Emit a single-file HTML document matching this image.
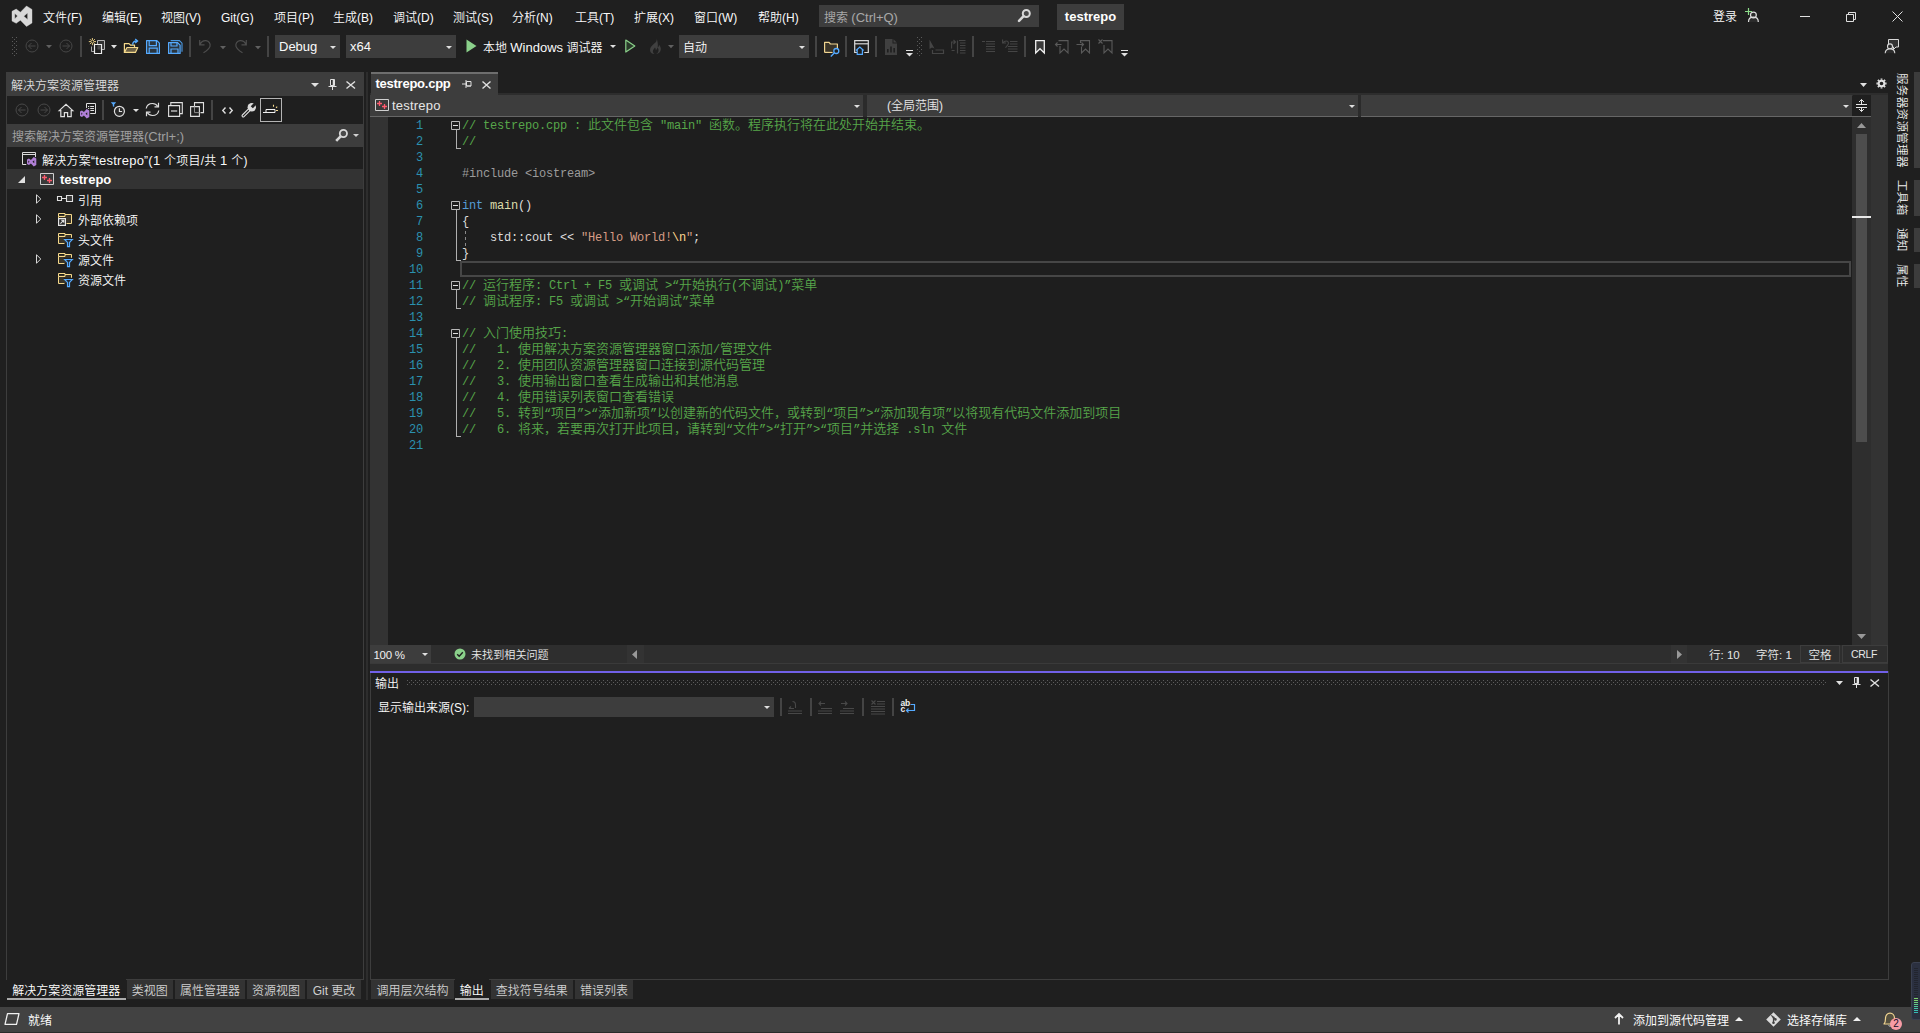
<!DOCTYPE html>
<html lang="zh-CN"><head><meta charset="utf-8"><title>testrepo - Microsoft Visual Studio</title>
<style>
html,body{margin:0;padding:0}
body{width:1920px;height:1033px;background:#1f1f1f;overflow:hidden;position:relative;
font-family:"Liberation Sans","Noto Sans CJK SC",sans-serif;font-size:12px;color:#fafafa;font-weight:350}
.a{position:absolute;box-sizing:border-box}
.t{position:absolute;white-space:nowrap}
.l{font-size:13px;line-height:0}
.code{position:absolute;white-space:pre;font-family:"Liberation Mono","Noto Sans CJK SC",monospace;font-size:12px;letter-spacing:-0.2px;height:16px;line-height:16px}
.code .c{font-family:"Noto Sans CJK SC",sans-serif;font-size:13px;letter-spacing:0;line-height:0;font-weight:350}
.ln{position:absolute;white-space:pre;font-family:"Liberation Mono",monospace;font-size:12px;letter-spacing:-0.2px;height:16px;line-height:16px;color:#2b91af;text-align:right;width:40px}
svg{overflow:visible}
</style></head>
<body>
<svg class="a" style="left:12px;top:5.9px;" width="20" height="20.4" viewBox="0 0 20 20.4"><path d="M0 5.300L4.200 3.100L8.400 6.200L14.500 0L20 3.400V17L14.500 20.400L8.400 14.200L4.200 17.300L0 15.100ZM2.800 7.400L5.500 10.050L2.800 12.700ZM15.600 7L11.800 10.200L15.600 13.400Z" fill="#d8d8d8" fill-rule="evenodd" stroke="#d8d8d8" stroke-width="0.400" stroke-linejoin="round"/></svg>
<div class="t" style="left:43px;top:10px;height:16px;line-height:16px;color:#fafafa;">文件(F)</div>
<div class="t" style="left:102px;top:10px;height:16px;line-height:16px;color:#fafafa;">编辑(E)</div>
<div class="t" style="left:161px;top:10px;height:16px;line-height:16px;color:#fafafa;">视图(V)</div>
<div class="t" style="left:221px;top:10px;height:16px;line-height:16px;color:#fafafa;">Git(G)</div>
<div class="t" style="left:274px;top:10px;height:16px;line-height:16px;color:#fafafa;">项目(P)</div>
<div class="t" style="left:333px;top:10px;height:16px;line-height:16px;color:#fafafa;">生成(B)</div>
<div class="t" style="left:393px;top:10px;height:16px;line-height:16px;color:#fafafa;">调试(D)</div>
<div class="t" style="left:453px;top:10px;height:16px;line-height:16px;color:#fafafa;">测试(S)</div>
<div class="t" style="left:512px;top:10px;height:16px;line-height:16px;color:#fafafa;">分析(N)</div>
<div class="t" style="left:575px;top:10px;height:16px;line-height:16px;color:#fafafa;">工具(T)</div>
<div class="t" style="left:634px;top:10px;height:16px;line-height:16px;color:#fafafa;">扩展(X)</div>
<div class="t" style="left:694px;top:10px;height:16px;line-height:16px;color:#fafafa;">窗口(W)</div>
<div class="t" style="left:758px;top:10px;height:16px;line-height:16px;color:#fafafa;">帮助(H)</div>
<div class="a" style="left:819px;top:5px;width:220px;height:22px;background:#3d3d3d;"></div>
<div class="t" style="left:824px;top:10px;height:16px;line-height:16px;color:#a8a8a8;font-weight:400;">搜索 <span class="l">(Ctrl+Q)</span></div>
<svg class="a" style="left:1016px;top:8px;" width="16" height="16" viewBox="0 0 16 16"><circle cx="10.300" cy="5.500" r="3.500" fill="#4a4a4a" stroke="#d8d8d8" stroke-width="2"/><path d="M7.600 8.200 L3 12.800" stroke="#d8d8d8" stroke-width="2.600" stroke-linecap="round"/></svg>
<div class="a" style="left:1057px;top:4px;width:67px;height:26px;background:#3d3d3d;"></div>
<div class="t" style="left:1057px;top:9px;height:16px;line-height:16px;color:#ffffff;font-size:13px;width:67px;text-align:center;font-weight:bold;">testrepo</div>
<div class="t" style="left:1713px;top:8.5px;height:16px;line-height:16px;color:#fafafa;">登录</div>
<svg class="a" style="left:1744px;top:7px;" width="16" height="16" viewBox="0 0 16 16"><path d="M1.500 12.500c0-3.200 2.200-5.200 5-5.200s5 2 5 5.200z" fill="#2b2b2b" transform="translate(3,2.500)"/><circle cx="9.400" cy="8" r="2.900" fill="#2b2b2b" stroke="#e0e0e0" stroke-width="1.200"/><path d="M4.500 15c0-3.200 2.200-4.800 4.900-4.800s4.900 1.600 4.900 4.800" fill="none" stroke="#e0e0e0" stroke-width="1.200"/><path d="M4.500 1v7M1 4.500h7" stroke="#8ddc8a" stroke-width="1.200"/></svg>
<div class="a" style="left:1800px;top:16px;width:10px;height:1px;background:#e0e0e0;"></div>
<svg class="a" style="left:1846px;top:12px;" width="10" height="10" viewBox="0 0 10 10"><path d="M0.5 2.5h7v7h-7z M2.5 2.5v-2h7v7h-2" fill="none" stroke="#e0e0e0" stroke-width="1"/></svg>
<svg class="a" style="left:1892px;top:11px;" width="11" height="11" viewBox="0 0 11 11"><path d="M0.5 0.5L10.5 10.5M10.5 0.5L0.5 10.5" stroke="#e0e0e0" stroke-width="1"/></svg>
<svg class="a" style="left:1884px;top:38px;" width="16" height="16" viewBox="0 0 16 16"><path d="M4.500 1.500h10v7.500h-2.500l-2.500 2.500v-2.500h-5z" fill="#333" stroke="#d8d8d8" stroke-width="1" stroke-linejoin="round"/><path d="M1 15.500c0-3 2-4.600 4.800-4.600s4.800 1.600 4.800 4.600z" fill="#1f1f1f"/><circle cx="6" cy="8.400" r="2.500" fill="#2b2b2b" stroke="#d8d8d8" stroke-width="1.100"/><path d="M1.200 15.300c0-3 2-4.400 4.800-4.400s4.800 1.400 4.800 4.400" fill="#2b2b2b" stroke="#d8d8d8" stroke-width="1.100"/></svg>
<svg class="a" style="left:12px;top:37px;" width="5" height="20" viewBox="0 0 5 20"><g fill="#5a5a5a"><rect x="0" y="0" width="1" height="1"/><rect x="4" y="0" width="1" height="1"/><rect x="2" y="2" width="1" height="1"/><rect x="0" y="4" width="1" height="1"/><rect x="4" y="4" width="1" height="1"/><rect x="2" y="6" width="1" height="1"/><rect x="0" y="8" width="1" height="1"/><rect x="4" y="8" width="1" height="1"/><rect x="2" y="10" width="1" height="1"/><rect x="0" y="12" width="1" height="1"/><rect x="4" y="12" width="1" height="1"/><rect x="2" y="14" width="1" height="1"/><rect x="0" y="16" width="1" height="1"/><rect x="4" y="16" width="1" height="1"/><rect x="2" y="18" width="1" height="1"/></g></svg>
<svg class="a" style="left:23.5px;top:37.5px" width="16" height="16" viewBox="-8 -8 16 16"><circle r="6" fill="none" stroke="#464646" stroke-width="1"/><path d="M-3.5 0H3.5M-0.5 -3L-3.5 0L-0.5 3" fill="none" stroke="#464646" stroke-width="1"/></svg>
<svg class="a" style="left:46.0px;top:44.85px" width="6" height="3.3" viewBox="0 0 6 3.3"><path d="M0 0H6L3.0 3.3Z" fill="#606060"/></svg>
<svg class="a" style="left:57.5px;top:37.5px" width="16" height="16" viewBox="-8 -8 16 16"><circle r="6" fill="none" stroke="#464646" stroke-width="1"/><path d="M-3.5 0H3.5M0.5 -3L3.5 0L0.5 3" fill="none" stroke="#464646" stroke-width="1"/></svg>
<div class="a" style="left:80px;top:36px;width:2px;height:21px;background:#444;"></div>
<svg class="a" style="left:89px;top:38px;" width="17" height="16" viewBox="0 0 17 16"><path d="M8.500 2.500h7v9h-7z" fill="#333" stroke="#b4b4b4" stroke-width="1"/><path d="M2.500 8.500v5h3" fill="none" stroke="#a8a8a8" stroke-width="1"/><path d="M5.500 6.500h7v9h-7z" fill="#1f1f1f" stroke="#ececec" stroke-width="1.200"/><path d="M8.500 7.200h3.400v4.300h-3.400z" fill="#4a4a4a"/><path d="M3.400 0v7.200M-0.200 3.600h7.200M0.900 1.100l5 5M5.900 1.100l-5 5" stroke="#f5d98b" stroke-width="0.900"/><circle cx="3.400" cy="3.600" r="1.100" fill="#1f1f1f"/></svg>
<svg class="a" style="left:111.0px;top:44.8px" width="6" height="3.4" viewBox="0 0 6 3.4"><path d="M0 0H6L3.0 3.4Z" fill="#e0e0e0"/></svg>
<svg class="a" style="left:123px;top:38px;" width="16" height="16" viewBox="0 0 16 16"><path d="M1.400 14.400V5.600H6L7.500 7.100h4v2.400" fill="none" stroke="#f5d98b" stroke-width="1.200" stroke-linejoin="round"/><path d="M1.400 14.400L4 9.500h10.800L12.400 14.400z" fill="#6b5f45" stroke="#f5d98b" stroke-width="1.200" stroke-linejoin="round"/><path d="M9.600 6.800C9.600 4.200 10.800 3 13.800 3M12.200 0.900L14.600 3L12.200 5.100" fill="none" stroke="#55aaff" stroke-width="1.300"/></svg>
<svg class="a" style="left:146px;top:40px;" width="14" height="14" viewBox="0 0 14 14"><path d="M0.600 0.600H10.900L13.400 3.100V13.400H0.600z" fill="#2a343d" stroke="#55aaff" stroke-width="1.200" stroke-linejoin="round"/><path d="M3.200 0.600V5.600h7.200V0.600M3.200 13.400V8.200h8V13.400" fill="none" stroke="#55aaff" stroke-width="1.200"/></svg>
<svg class="a" style="left:168px;top:40px;" width="15" height="14" viewBox="0 0 15 14"><path d="M2.600 0.600H11.400L14 3.200V11.800" fill="none" stroke="#4a98e0" stroke-width="1.100"/><path d="M0.600 2.600H9.600L12.100 5.100V13.400H0.600z" fill="#2a343d" stroke="#55aaff" stroke-width="1.200" stroke-linejoin="round"/><path d="M3 2.600V6h6V2.600M3 13.400V9h7v4.400" fill="none" stroke="#55aaff" stroke-width="1.200"/></svg>
<div class="a" style="left:189px;top:36px;width:2px;height:21px;background:#444;"></div>
<svg class="a" style="left:199px;top:39px;" width="13" height="14" viewBox="0 0 13 14"><path d="M0.7 1v4.8h4.8M1 5.5c1.2-2.5 3.4-4 6-3.8c3 .3 4.7 3 4 5.6c-.6 2-3 4.2-6.5 6.5" fill="none" stroke="#4d4d4d" stroke-width="1.2"/></svg>
<svg class="a" style="left:220.0px;top:45.85px" width="6" height="3.3" viewBox="0 0 6 3.3"><path d="M0 0H6L3.0 3.3Z" fill="#606060"/></svg>
<svg class="a" style="left:233.5px;top:39px;" width="13" height="14" viewBox="0 0 13 14"><path d="M12.3 1v4.8h-4.8M12 5.5c-1.2-2.5-3.4-4-6-3.8c-3 .3-4.7 3-4 5.6c.6 2 3 4.2 6.5 6.5" fill="none" stroke="#4d4d4d" stroke-width="1.2"/></svg>
<svg class="a" style="left:255.0px;top:45.85px" width="6" height="3.3" viewBox="0 0 6 3.3"><path d="M0 0H6L3.0 3.3Z" fill="#606060"/></svg>
<div class="a" style="left:267px;top:36px;width:2px;height:21px;background:#444;"></div>
<div class="a" style="left:275px;top:35px;width:65px;height:23px;background:#3d3d3d;"></div>
<div class="t" style="left:279px;top:39px;height:16px;line-height:16px;color:#fafafa;font-size:13px;">Debug</div>
<svg class="a" style="left:330.0px;top:45.5px" width="6" height="3" viewBox="0 0 6 3"><path d="M0 0H6L3.0 3Z" fill="#e0e0e0"/></svg>
<div class="a" style="left:346px;top:35px;width:110px;height:23px;background:#3d3d3d;"></div>
<div class="t" style="left:350px;top:39px;height:16px;line-height:16px;color:#fafafa;font-size:13px;">x64</div>
<svg class="a" style="left:446.0px;top:45.5px" width="6" height="3" viewBox="0 0 6 3"><path d="M0 0H6L3.0 3Z" fill="#e0e0e0"/></svg>
<svg class="a" style="left:465.5px;top:39px;" width="11" height="14" viewBox="0 0 11 14"><path d="M0.5 0.5L10.5 7L0.5 13.5Z" fill="#8ad08a"/></svg>
<div class="t" style="left:483px;top:40px;height:16px;line-height:16px;color:#fafafa;">本地 <span class="l">Windows</span> 调试器</div>
<svg class="a" style="left:610.0px;top:45.0px" width="6" height="3" viewBox="0 0 6 3"><path d="M0 0H6L3.0 3Z" fill="#e0e0e0"/></svg>
<svg class="a" style="left:625px;top:39px;" width="11" height="14" viewBox="0 0 11 14"><path d="M0.8 1L9.8 7L0.8 13Z" fill="#2a3a2a" stroke="#8ad08a" stroke-width="1.2" stroke-linejoin="round"/></svg>
<svg class="a" style="left:647px;top:38px;" width="15" height="16" viewBox="0 0 15 16"><path d="M9.500 0.300c.8 2.200-.4 3.800-2.200 5.300c-2.300 1.900-4.300 3.700-4.300 6.300c0 2.400 2 4 4.500 4c-1.300-.7-1.900-1.900-1.500-3.300c.3-1.200 1.400-2 2-3.200c.7 1 .9 1.800.7 2.800c1-.5 1.600-1.500 1.700-2.700c1 1 1.300 2.200 1.100 3.400c-.2 1.400-1.200 2.500-2.500 3c2.800-.2 4.800-2.200 4.800-5c0-1.600-.7-3-1.800-4.200c0 1.300-.4 2.200-1.300 2.800c.6-3.300-.3-6.600-1.200-9.200z" fill="#404040"/></svg>
<svg class="a" style="left:667.5px;top:44.85px" width="6" height="3.3" viewBox="0 0 6 3.3"><path d="M0 0H6L3.0 3.3Z" fill="#606060"/></svg>
<div class="a" style="left:679px;top:35px;width:130px;height:23px;background:#3d3d3d;"></div>
<div class="t" style="left:683px;top:40px;height:16px;line-height:16px;color:#fafafa;">自动</div>
<svg class="a" style="left:799.0px;top:45.5px" width="6" height="3" viewBox="0 0 6 3"><path d="M0 0H6L3.0 3Z" fill="#e0e0e0"/></svg>
<div class="a" style="left:815px;top:36px;width:2px;height:21px;background:#444;"></div>
<svg class="a" style="left:824px;top:40.5px;" width="16" height="16" viewBox="0 0 16 16"><path d="M0.6 11.400v-10h4.500l1.300 1.600h7v6" fill="#3a3428" stroke="#f0d490" stroke-width="1.2" stroke-linejoin="round"/><path d="M0.6 11.400h8" stroke="#f0d490" stroke-width="1.200"/><circle cx="12.300" cy="10" r="2.500" fill="#1f1f1f" stroke="#55aaff" stroke-width="1.300"/><path d="M10.500 11.800L6.800 15.500" stroke="#55aaff" stroke-width="1.300"/></svg>
<div class="a" style="left:845px;top:36px;width:2px;height:21px;background:#444;"></div>
<svg class="a" style="left:854px;top:40px;" width="15" height="15" viewBox="0 0 15 15"><path d="M3 12.500h-2.300v-11.800h13.600v11.800h-4" fill="none" stroke="#d8d8d8" stroke-width="1.200"/><path d="M0.700 3.800h13.600" stroke="#d8d8d8" stroke-width="1.200"/><path d="M2 10.500L5.800 7L9.600 10.500M3.200 9.800v4.600h5.200v-4.600" fill="#1f1f1f" stroke="#55aaff" stroke-width="1.200"/></svg>
<div class="a" style="left:875px;top:36px;width:2px;height:21px;background:#444;"></div>
<svg class="a" style="left:885px;top:39px;" width="12" height="16" viewBox="0 0 12 16"><path d="M0 0h7.500v4.500h4.500v11.500h-12z" fill="#404040"/><path d="M8.500 0.300l3.300 3.300h-3.300z" fill="#404040"/><path d="M2.800 13.500v-3.500M6 13.500v-6M9.200 13.500v-4.500" stroke="#1f1f1f" stroke-width="1.600"/></svg>
<div class="a" style="left:906.0px;top:50.0px;width:7px;height:1.3px;background:#e0e0e0;"></div>
<svg class="a" style="left:906.0px;top:52.55px" width="7" height="3.5" viewBox="0 0 7 3.5"><path d="M0 0H7L3.5 3.5Z" fill="#e0e0e0"/></svg>
<svg class="a" style="left:917px;top:37px;" width="5" height="20" viewBox="0 0 5 20"><g fill="#5a5a5a"><rect x="0" y="0" width="1" height="1"/><rect x="4" y="0" width="1" height="1"/><rect x="2" y="2" width="1" height="1"/><rect x="0" y="4" width="1" height="1"/><rect x="4" y="4" width="1" height="1"/><rect x="2" y="6" width="1" height="1"/><rect x="0" y="8" width="1" height="1"/><rect x="4" y="8" width="1" height="1"/><rect x="2" y="10" width="1" height="1"/><rect x="0" y="12" width="1" height="1"/><rect x="4" y="12" width="1" height="1"/><rect x="2" y="14" width="1" height="1"/><rect x="0" y="16" width="1" height="1"/><rect x="4" y="16" width="1" height="1"/><rect x="2" y="18" width="1" height="1"/></g></svg>
<svg class="a" style="left:929px;top:39px;" width="16" height="16" viewBox="0 0 16 16"><path d="M0.500 0.500l5 9l-2.500-1l-2.500 1.500z" fill="#454545"/><path d="M3.500 11v3.500h11v-3.500h-8" fill="none" stroke="#454545" stroke-width="1.200"/></svg>
<svg class="a" style="left:951px;top:39px;" width="15" height="16" viewBox="0 0 15 16"><path d="M0.600 9.500v-6.500h3.500M2.500 1l2 2l-2 2M0.600 11.500h3" fill="none" stroke="#454545" stroke-width="1.100"/><path d="M6.500 1.500v13" stroke="#454545" stroke-width="1.200"/><path d="M8 1.500h6.500M9 4h5.500M9 6.500h5.500M9 9h5.500M9 11.500h5.500M9 14h5.500" stroke="#454545" stroke-width="1"/></svg>
<div class="a" style="left:972px;top:36px;width:2px;height:21px;background:#444;"></div>
<svg class="a" style="left:982px;top:41px;" width="13" height="12" viewBox="0 0 13 12"><path d="M0 0.500h3M4 0.500h9M4 3h9M4 5.500h9M4 8h9M4 10.500h9" stroke="#454545" stroke-width="1"/></svg>
<svg class="a" style="left:1002px;top:39px;" width="16" height="15" viewBox="0 0 16 15"><path d="M0.600 0.500v3.500h3.500M1 3.800c1.500-2.500 5-2.500 5.500 0c.3 2-2 3-3 5" fill="none" stroke="#454545" stroke-width="1.100"/><path d="M8 2.500h7.500M8 5h7.500M6 7.500h9.500M6 10h9.500M6 12.500h9.500" stroke="#454545" stroke-width="1"/></svg>
<div class="a" style="left:1024px;top:36px;width:2px;height:21px;background:#444;"></div>
<svg class="a" style="left:1035px;top:40px;" width="10" height="14" viewBox="0 0 10 14"><path d="M0.700 0.700h8.600v12.300l-4.300-4.300l-4.300 4.300z" fill="#3a3a3a" stroke="#f0f0f0" stroke-width="1.300"/></svg>
<svg class="a" style="left:1055px;top:40px;" width="14" height="14" viewBox="0 0 14 14"><path d="M3.500 0.600h9.500v12.400l-4-4l-4 4v-7" fill="none" stroke="#5a5a5a" stroke-width="1.100"/><path d="M0.500 4.500h6M2.500 2.500l-2 2l2 2" fill="none" stroke="#5a5a5a" stroke-width="1.100"/></svg>
<svg class="a" style="left:1076px;top:40px;" width="14" height="14" viewBox="0 0 14 14"><path d="M4.500 3v-2.400h9v12.400l-4-4l-4 4v-6" fill="none" stroke="#5a5a5a" stroke-width="1.100"/><path d="M0.500 4.500h7M5.500 2.500l2 2l-2 2" fill="none" stroke="#5a5a5a" stroke-width="1.100"/></svg>
<svg class="a" style="left:1098px;top:39px;" width="15" height="15" viewBox="0 0 15 15"><path d="M5 1.600h9v12.400l-4-4l-4 4v-8" fill="none" stroke="#5a5a5a" stroke-width="1.100"/><path d="M0.500 0.500l4 4M4.500 0.500l-4 4" stroke="#5a5a5a" stroke-width="1.100"/></svg>
<div class="a" style="left:1120.5px;top:50.0px;width:7px;height:1.3px;background:#e0e0e0;"></div>
<svg class="a" style="left:1120.5px;top:52.55px" width="7" height="3.5" viewBox="0 0 7 3.5"><path d="M0 0H7L3.5 3.5Z" fill="#e0e0e0"/></svg>
<div class="a" style="left:6px;top:72px;width:358px;height:908px;border:1px solid #3d3d3d;"></div>
<div class="a" style="left:6px;top:72px;width:358px;height:24px;background:#3d3d3d;"></div>
<div class="t" style="left:11px;top:78px;height:16px;line-height:16px;color:#dcdcdc;">解决方案资源管理器</div>
<svg class="a" style="left:311.0px;top:83.0px" width="8" height="4" viewBox="0 0 8 4"><path d="M0 0H8L4.0 4Z" fill="#e0e0e0"/></svg>
<svg class="a" style="left:328px;top:79px;" width="9" height="11" viewBox="0 0 9 11"><path d="M2.500 0.500h4v6h-4z" fill="#2b2b2b" stroke="#e0e0e0" stroke-width="1"/><path d="M5.500 0.500v6" stroke="#e0e0e0" stroke-width="1.600"/><path d="M0.500 7.500h8M4.500 7.500v3.500" fill="none" stroke="#e0e0e0" stroke-width="1"/></svg>
<svg class="a" style="left:345.5px;top:81px;" width="9.5" height="8" viewBox="0 0 9.5 8"><path d="M0.500 0.500L9.0 7.5M9.0 0.500L0.500 7.5" stroke="#e0e0e0" stroke-width="1.400"/></svg>
<svg class="a" style="left:13.5px;top:101.5px" width="16" height="16" viewBox="-8 -8 16 16"><circle r="6" fill="none" stroke="#484848" stroke-width="1"/><path d="M-3.5 0H3.5M-0.5 -3L-3.5 0L-0.5 3" fill="none" stroke="#484848" stroke-width="1"/></svg>
<svg class="a" style="left:35.5px;top:101.5px" width="16" height="16" viewBox="-8 -8 16 16"><circle r="6" fill="none" stroke="#484848" stroke-width="1"/><path d="M-3.5 0H3.5M0.5 -3L3.5 0L0.5 3" fill="none" stroke="#484848" stroke-width="1"/></svg>
<svg class="a" style="left:58px;top:102px;" width="16" height="16" viewBox="0 0 16 16"><path d="M1.200 8.600L8 2.200L14.800 8.600h-1.600v6h-3.600v-4h-3.200v4h-3.600v-6z" fill="#2b2b2b" stroke="#e0e0e0" stroke-width="1.200" stroke-linejoin="miter"/></svg>
<svg class="a" style="left:86px;top:103px;" width="10" height="11" viewBox="0 0 10 11"><path d="M0.500 0.500h9v10h-9z" fill="#1f1f1f" stroke="#e0e0e0" stroke-width="1"/><path d="M2 3.500h1.200M4.200 3.500h3.800M2 5.500h1.200M4.200 5.500h3.800M2 7.500h1.200M4.200 7.500h3.800" stroke="#e0e0e0" stroke-width="1"/></svg>
<svg class="a" style="left:80px;top:108.5px;" width="9.3" height="9.5" viewBox="0 0 20 20.400"><path d="M0 5.300L4.200 3.100L8.400 6.200L14.500 0L20 3.400V17L14.500 20.400L8.400 14.200L4.200 17.300L0 15.100ZM2.800 7.400L5.500 10.050L2.800 12.700ZM15.600 7L11.800 10.200L15.600 13.400Z" fill="#1f1f1f" stroke="#1f1f1f" stroke-width="4"/><path d="M0 5.300L4.200 3.100L8.400 6.200L14.500 0L20 3.400V17L14.500 20.400L8.400 14.200L4.200 17.300L0 15.100ZM2.800 7.400L5.500 10.050L2.800 12.700ZM15.600 7L11.800 10.200L15.600 13.400Z" fill="#b180d7" fill-rule="evenodd"/></svg>
<div class="a" style="left:102px;top:100px;width:2px;height:20px;background:#444;"></div>
<svg class="a" style="left:110px;top:101px;" width="16" height="17" viewBox="0 0 16 17"><path d="M0.800 1.200h5.400l-2 2.300v2.500l-1.400-.8v-1.700z" fill="#55aaff"/><circle cx="9.400" cy="10.300" r="5" fill="#2b2b2b" stroke="#e0e0e0" stroke-width="1.200"/><path d="M9.400 7.300v3.200h2.700" fill="none" stroke="#e0e0e0" stroke-width="1.100"/></svg>
<svg class="a" style="left:132.5px;top:108.5px" width="6" height="3" viewBox="0 0 6 3"><path d="M0 0H6L3.0 3Z" fill="#e0e0e0"/></svg>
<svg class="a" style="left:145px;top:102px;" width="15" height="15" viewBox="0 0 15 15"><path d="M1.200 6.500c.6-3 3.200-5 6.300-5c2.300 0 4.200 1.200 5.300 3M13.800 8.500c-.6 3-3.200 5-6.300 5c-2.300 0-4.200-1.200-5.300-3" fill="none" stroke="#e0e0e0" stroke-width="1.200"/><path d="M13.500 0.800v4h-4M1.500 14.200v-4h4" fill="none" stroke="#e0e0e0" stroke-width="1.200"/></svg>
<svg class="a" style="left:168px;top:102px;" width="15" height="15" viewBox="0 0 15 15"><path d="M0.600 3.600h11v10.800h-11zM2.800 3.400v-2.800h11.500v11h-2.500" fill="none" stroke="#e0e0e0" stroke-width="1.100"/><path d="M3 9h6.200" stroke="#e0e0e0" stroke-width="1.200"/></svg>
<svg class="a" style="left:190px;top:102px;" width="14" height="15" viewBox="0 0 14 15"><path d="M4.500 4v-3.400h9v10h-3" fill="none" stroke="#e0e0e0" stroke-width="1.100"/><path d="M0.600 4.600h8.800v9.800h-8.800z" fill="none" stroke="#e0e0e0" stroke-width="1.100"/><path d="M4.500 4.600v6h5" fill="none" stroke="#8a8a8a" stroke-width="1"/></svg>
<div class="a" style="left:211px;top:100px;width:2px;height:20px;background:#444;"></div>
<svg class="a" style="left:221.5px;top:106.5px;" width="11" height="7" viewBox="0 0 11 7"><path d="M3.500 0.600L0.800 3.500L3.500 6.400M7.500 0.600L10.200 3.500L7.500 6.400" fill="none" stroke="#e0e0e0" stroke-width="1.400"/></svg>
<svg class="a" style="left:241px;top:102px;" width="16" height="16" viewBox="0 0 16 16"><path d="M2.200 13.800L9 7" stroke="#e0e0e0" stroke-width="3.400" stroke-linecap="round"/><path d="M2.200 13.800L9 7" stroke="#1f1f1f" stroke-width="1.200" stroke-linecap="round"/><circle cx="10.800" cy="5.200" r="4.200" fill="#dcdcdc"/><path d="M10.800 5.200L16 0" stroke="#1f1f1f" stroke-width="3"/></svg>
<div class="a" style="left:260px;top:98px;width:22px;height:24px;border:1px solid #b4b4b4;"></div>
<svg class="a" style="left:263px;top:104px;" width="16" height="10" viewBox="0 0 16 10"><path d="M3 5.500h9v3h-9z" fill="none" stroke="#f0f0f0" stroke-width="1"/><path d="M0 8.500h12" stroke="#f0f0f0" stroke-width="1"/><path d="M10.500 0.800v2M13 3.800l1.200-1.200M13 6.500h2" stroke="#f5d98b" stroke-width="1.100"/></svg>
<div class="a" style="left:7px;top:124px;width:356px;height:23px;background:#3d3d3d;"></div>
<div class="t" style="left:12px;top:129px;height:16px;line-height:16px;color:#a0a0a0;font-weight:400;">搜索解决方案资源管理器<span class="l">(Ctrl+;)</span></div>
<svg class="a" style="left:333px;top:128px;" width="16" height="16" viewBox="0 0 16 16"><circle cx="10.400" cy="5.500" r="3.600" fill="#4a4a4a" stroke="#d8d8d8" stroke-width="1.800"/><path d="M7.600 8.300 L3.200 12.800" stroke="#d8d8d8" stroke-width="2.600" stroke-linecap="butt"/></svg>
<svg class="a" style="left:353.0px;top:134.0px" width="6" height="3" viewBox="0 0 6 3"><path d="M0 0H6L3.0 3Z" fill="#d0d0d0"/></svg>
<div class="a" style="left:7px;top:169px;width:356px;height:20px;background:#333333;"></div>
<svg class="a" style="left:22px;top:152px;" width="15" height="15" viewBox="0 0 15 15"><path d="M4.500 12.500h-4v-12h13v5" fill="none" stroke="#dcdcdc" stroke-width="1"/><path d="M0.500 2.500h13" stroke="#dcdcdc" stroke-width="1"/></svg>
<svg class="a" style="left:26.8px;top:156.8px;" width="9.3" height="9.5" viewBox="0 0 20 20.400"><path d="M0 5.300L4.200 3.100L8.400 6.200L14.500 0L20 3.400V17L14.500 20.400L8.400 14.200L4.200 17.300L0 15.100ZM2.800 7.400L5.500 10.050L2.800 12.700ZM15.600 7L11.800 10.200L15.600 13.400Z" fill="#1f1f1f" stroke="#1f1f1f" stroke-width="3"/><path d="M0 5.300L4.200 3.100L8.400 6.200L14.500 0L20 3.400V17L14.500 20.400L8.400 14.200L4.200 17.300L0 15.100ZM2.800 7.400L5.500 10.050L2.800 12.700ZM15.600 7L11.800 10.200L15.600 13.400Z" fill="#b180d7" fill-rule="evenodd"/></svg>
<div class="t" style="left:42px;top:153px;height:16px;line-height:16px;color:#fafafa;letter-spacing:0.240px;">解决方案“<span class="l">testrepo</span>”<span class="l">(1</span> 个项目/共 <span class="l">1</span> 个)</div>
<svg class="a" style="left:17.5px;top:175.5px;" width="7" height="7" viewBox="0 0 7 7"><path d="M7 0v7h-7z" fill="#e0e0e0"/></svg>
<svg class="a" style="left:40px;top:173px;" width="14" height="12" viewBox="0 0 14 12"><path d="M0.500 0.500h13v11h-13z" fill="#3a3a3a" stroke="#d0d0d0" stroke-width="1"/><path d="M4.500 2v5M2 4.500h5M9.500 5v5M7 7.500h5" stroke="#ff5a6e" stroke-width="1.300"/></svg>
<div class="t" style="left:60px;top:172px;height:16px;line-height:16px;color:#ffffff;font-size:13px;font-weight:bold;">testrepo</div>
<svg class="a" style="left:36px;top:193.5px;" width="6" height="10" viewBox="0 0 6 10"><path d="M0.500 0.800L4.800 5L0.500 9.200z" fill="none" stroke="#d8d8d8" stroke-width="1"/></svg>
<svg class="a" style="left:36px;top:213.5px;" width="6" height="10" viewBox="0 0 6 10"><path d="M0.500 0.800L4.800 5L0.500 9.200z" fill="none" stroke="#d8d8d8" stroke-width="1"/></svg>
<svg class="a" style="left:36px;top:253.5px;" width="6" height="10" viewBox="0 0 6 10"><path d="M0.500 0.800L4.800 5L0.500 9.200z" fill="none" stroke="#d8d8d8" stroke-width="1"/></svg>
<svg class="a" style="left:57px;top:195px;" width="16" height="8" viewBox="0 0 16 8"><path d="M9.500 0.500h6v6h-6z" fill="#383838" stroke="#e0e0e0" stroke-width="1.100"/><path d="M0.500 1.500h4v4h-4zM4.500 3.500h5" fill="none" stroke="#e0e0e0" stroke-width="1.100"/></svg>
<div class="t" style="left:78px;top:193px;height:16px;line-height:16px;color:#fafafa;">引用</div>
<svg class="a" style="left:57px;top:212px;" width="16" height="16" viewBox="0 0 16 16"><path d="M2 3h12v8h-12z" fill="#3a3428"/><path d="M1.500 1.500h6.500v3h-6.500zM8 2.500h6.500v9h-5M1.500 4.500v2" fill="none" stroke="#f5d98b" stroke-width="1"/><path d="M1.600 6.600h6.800v6.800h-6.800z" fill="#262626" stroke="#e6e6e6" stroke-width="1.200"/><path d="M3.400 11.600l3.200-3.200M4.200 8.200h2.600v2.600" fill="none" stroke="#e0e0e0" stroke-width="1.100"/></svg>
<div class="t" style="left:78px;top:213px;height:16px;line-height:16px;color:#fafafa;">外部依赖项</div>
<svg class="a" style="left:57px;top:232px;" width="16" height="16" viewBox="0 0 16 16"><path d="M2 3h12v8h-12z" fill="#3a3428"/><path d="M1.500 1.500h6.500v3h-6.500zM8 2.500h6.500v4.500M1.500 4.500v7h6" fill="none" stroke="#f5d98b" stroke-width="1"/><path d="M6 5.800h11l-3.800 4v5.700h-3.400v-5.700z" fill="#1f1f1f"/><path d="M7.700 7.500h7.600l-2.800 2.900v4.200h-2v-4.200z" fill="#1f2a36" stroke="#55aaff" stroke-width="1.200"/></svg>
<div class="t" style="left:78px;top:233px;height:16px;line-height:16px;color:#fafafa;">头文件</div>
<svg class="a" style="left:57px;top:252px;" width="16" height="16" viewBox="0 0 16 16"><path d="M2 3h12v8h-12z" fill="#3a3428"/><path d="M1.500 1.500h6.500v3h-6.500zM8 2.500h6.500v4.500M1.500 4.500v7h6" fill="none" stroke="#f5d98b" stroke-width="1"/><path d="M6 5.800h11l-3.800 4v5.700h-3.400v-5.700z" fill="#1f1f1f"/><path d="M7.700 7.500h7.600l-2.800 2.900v4.200h-2v-4.200z" fill="#1f2a36" stroke="#55aaff" stroke-width="1.200"/></svg>
<div class="t" style="left:78px;top:253px;height:16px;line-height:16px;color:#fafafa;">源文件</div>
<svg class="a" style="left:57px;top:272px;" width="16" height="16" viewBox="0 0 16 16"><path d="M2 3h12v8h-12z" fill="#3a3428"/><path d="M1.500 1.500h6.500v3h-6.500zM8 2.500h6.500v4.500M1.500 4.500v7h6" fill="none" stroke="#f5d98b" stroke-width="1"/><path d="M6 5.800h11l-3.800 4v5.700h-3.400v-5.700z" fill="#1f1f1f"/><path d="M7.700 7.500h7.600l-2.800 2.900v4.200h-2v-4.200z" fill="#1f2a36" stroke="#55aaff" stroke-width="1.200"/></svg>
<div class="t" style="left:78px;top:273px;height:16px;line-height:16px;color:#fafafa;">资源文件</div>
<div class="a" style="left:7px;top:979px;width:118.5px;height:21px;background:#1f1f1f;border-bottom:2px solid #ababab;"></div>
<div class="t" style="left:7px;top:983px;height:16px;line-height:16px;color:#ffffff;width:118.5px;text-align:center;">解决方案资源管理器</div>
<div class="a" style="left:126.5px;top:980px;width:46.5px;height:19px;background:#333333;"></div>
<div class="t" style="left:126.5px;top:983px;height:16px;line-height:16px;color:#d0d0d0;width:46.5px;text-align:center;">类视图</div>
<div class="a" style="left:175px;top:980px;width:70px;height:19px;background:#333333;"></div>
<div class="t" style="left:175px;top:983px;height:16px;line-height:16px;color:#d0d0d0;width:70px;text-align:center;">属性管理器</div>
<div class="a" style="left:247px;top:980px;width:58px;height:19px;background:#333333;"></div>
<div class="t" style="left:247px;top:983px;height:16px;line-height:16px;color:#d0d0d0;width:58px;text-align:center;">资源视图</div>
<div class="a" style="left:307px;top:980px;width:54px;height:19px;background:#333333;"></div>
<div class="t" style="left:307px;top:983px;height:16px;line-height:16px;color:#d0d0d0;width:54px;text-align:center;">Git 更改</div>
<div class="a" style="left:370px;top:93px;width:1518px;height:3px;background:#2d2d2d;"></div>
<div class="a" style="left:371px;top:72px;width:127px;height:24px;background:#3d3d3d;"></div>
<div class="a" style="left:371px;top:72px;width:127px;height:2px;background:#6e6e6e;"></div>
<div class="t" style="left:375.5px;top:76px;height:16px;line-height:16px;color:#ffffff;font-size:13px;font-weight:bold;letter-spacing:-0.250px;">testrepo.cpp</div>
<svg class="a" style="left:462px;top:80px;" width="10" height="9" viewBox="0 0 10 9"><path d="M4.500 1.500h4.500v4.500h-4.500zM4.500 6h4.500M4 0v8M0 4h4" fill="none" stroke="#e0e0e0" stroke-width="1"/></svg>
<svg class="a" style="left:481.5px;top:81px;" width="9" height="8" viewBox="0 0 9 8"><path d="M0.500 0.500L8.5 7.5M8.5 0.500L0.500 7.5" stroke="#e0e0e0" stroke-width="1.400"/></svg>
<svg class="a" style="left:1859.5px;top:82.5px" width="7" height="4" viewBox="0 0 7 4"><path d="M0 0H7L3.5 4Z" fill="#e0e0e0"/></svg>
<svg class="a" style="left:1875.5px;top:77.5px;" width="11" height="11" viewBox="0 0 12 12"><g fill="none" stroke="#e0e0e0"><circle cx="6" cy="6" r="3.100" stroke-width="2.200"/><path d="M6 0.500v1.500M6 10v1.500M0.500 6h1.500M10 6h1.500M2.100 2.100l1 1M8.900 8.900l1 1M9.900 2.100l-1 1M3.100 8.900l-1 1" stroke-width="2"/></g></svg>
<div class="a" style="left:370px;top:95px;width:1482px;height:21px;background:#3d3d3d;"></div>
<div class="a" style="left:370px;top:116px;width:1501px;height:1px;background:#666666;"></div>
<div class="a" style="left:863px;top:95px;width:4px;height:22px;background:#2b2b2b;"></div>
<div class="a" style="left:1358px;top:95px;width:3px;height:22px;background:#2b2b2b;"></div>
<svg class="a" style="left:375px;top:99px;" width="14" height="12" viewBox="0 0 14 12"><path d="M0.500 0.500h13v11h-13z" fill="#3a3a3a" stroke="#d0d0d0" stroke-width="1"/><path d="M4.500 2v5M2 4.500h5M9.500 5v5M7 7.500h5" stroke="#ff5a6e" stroke-width="1.300"/></svg>
<div class="t" style="left:392px;top:98px;height:16px;line-height:16px;color:#e6e6e6;font-size:13px;letter-spacing:0.200px;">testrepo</div>
<svg class="a" style="left:854.0px;top:104.5px" width="6" height="3" viewBox="0 0 6 3"><path d="M0 0H6L3.0 3Z" fill="#e0e0e0"/></svg>
<div class="t" style="left:887px;top:98px;height:16px;line-height:16px;color:#e6e6e6;">(全局范围)</div>
<svg class="a" style="left:1349.0px;top:104.5px" width="6" height="3" viewBox="0 0 6 3"><path d="M0 0H6L3.0 3Z" fill="#e0e0e0"/></svg>
<svg class="a" style="left:1843.0px;top:104.5px" width="6" height="3" viewBox="0 0 6 3"><path d="M0 0H6L3.0 3Z" fill="#e0e0e0"/></svg>
<div class="a" style="left:1853px;top:95px;width:18px;height:21px;background:#1f1f1f;"></div>
<svg class="a" style="left:1856px;top:99px;" width="11" height="13" viewBox="0 0 11 13"><path d="M5.500 0.500v4.500M5.500 8.500v4M3 3L5.500 0.500L8 3M3 10L5.500 12.500L8 10M0 5.500h11M0 8.500h11" fill="none" stroke="#e6e6e6" stroke-width="1"/></svg>
<div class="a" style="left:1871px;top:95px;width:17px;height:550px;background:#333333;"></div>
<div class="a" style="left:370px;top:117px;width:18px;height:528px;background:#333333;"></div>
<div class="a" style="left:388px;top:117px;width:1464px;height:528px;background:#1e1e1e;"></div>
<div class="a" style="left:1852px;top:117px;width:19px;height:528px;background:#2e2e2e;"></div>
<div class="a" style="left:1856px;top:134px;width:11px;height:308px;background:#4d4d4d;"></div>
<svg class="a" style="left:1857.0px;top:123.0px" width="9" height="5" viewBox="0 0 9 5"><path d="M0 5H9L4.5 0Z" fill="#999"/></svg>
<svg class="a" style="left:1857.0px;top:633.5px" width="9" height="5" viewBox="0 0 9 5"><path d="M0 0H9L4.5 5Z" fill="#999"/></svg>
<div class="a" style="left:1852px;top:216px;width:19px;height:2px;background:#e8e8e8;"></div>
<div class="a" style="left:460px;top:261px;width:1391px;height:16px;border:2px solid #464646;"></div>
<div class="ln" style="left:383px;top:118px">1</div>
<div class="code" style="left:462px;top:118px;color:#dcdcdc"><span style="color:#57a64a">// testrepo.cpp : <span class="c">此文件包含</span> "main" <span class="c">函数。程序执行将在此处开始并结束。</span></span></div>
<div class="ln" style="left:383px;top:134px">2</div>
<div class="code" style="left:462px;top:134px;color:#dcdcdc"><span style="color:#57a64a">//</span></div>
<div class="ln" style="left:383px;top:150px">3</div>
<div class="ln" style="left:383px;top:166px">4</div>
<div class="code" style="left:462px;top:166px;color:#dcdcdc"><span style="color:#9b9b9b">#include &lt;iostream&gt;</span></div>
<div class="ln" style="left:383px;top:182px">5</div>
<div class="ln" style="left:383px;top:198px">6</div>
<div class="code" style="left:462px;top:198px;color:#dcdcdc"><span style="color:#569cd6">int</span> <span style="color:#dcdcaa">main</span>()</div>
<div class="ln" style="left:383px;top:214px">7</div>
<div class="code" style="left:462px;top:214px;color:#dcdcdc">{</div>
<div class="ln" style="left:383px;top:230px">8</div>
<div class="code" style="left:462px;top:230px;color:#dcdcdc">    std::cout &lt;&lt; <span style="color:#d69d85">"Hello World!</span><span style="color:#ffd68f">\n</span><span style="color:#d69d85">"</span>;</div>
<div class="ln" style="left:383px;top:246px">9</div>
<div class="code" style="left:462px;top:246px;color:#dcdcdc">}</div>
<div class="ln" style="left:383px;top:262px">10</div>
<div class="ln" style="left:383px;top:278px">11</div>
<div class="code" style="left:462px;top:278px;color:#dcdcdc"><span style="color:#57a64a">// <span class="c">运行程序</span>: Ctrl + F5 <span class="c">或调试</span> &gt;“<span class="c">开始执行</span>(<span class="c">不调试</span>)”<span class="c">菜单</span></span></div>
<div class="ln" style="left:383px;top:294px">12</div>
<div class="code" style="left:462px;top:294px;color:#dcdcdc"><span style="color:#57a64a">// <span class="c">调试程序</span>: F5 <span class="c">或调试</span> &gt;“<span class="c">开始调试</span>”<span class="c">菜单</span></span></div>
<div class="ln" style="left:383px;top:310px">13</div>
<div class="ln" style="left:383px;top:326px">14</div>
<div class="code" style="left:462px;top:326px;color:#dcdcdc"><span style="color:#57a64a">// <span class="c">入门使用技巧</span>: </span></div>
<div class="ln" style="left:383px;top:342px">15</div>
<div class="code" style="left:462px;top:342px;color:#dcdcdc"><span style="color:#57a64a">//   1. <span class="c">使用解决方案资源管理器窗口添加</span>/<span class="c">管理文件</span></span></div>
<div class="ln" style="left:383px;top:358px">16</div>
<div class="code" style="left:462px;top:358px;color:#dcdcdc"><span style="color:#57a64a">//   2. <span class="c">使用团队资源管理器窗口连接到源代码管理</span></span></div>
<div class="ln" style="left:383px;top:374px">17</div>
<div class="code" style="left:462px;top:374px;color:#dcdcdc"><span style="color:#57a64a">//   3. <span class="c">使用输出窗口查看生成输出和其他消息</span></span></div>
<div class="ln" style="left:383px;top:390px">18</div>
<div class="code" style="left:462px;top:390px;color:#dcdcdc"><span style="color:#57a64a">//   4. <span class="c">使用错误列表窗口查看错误</span></span></div>
<div class="ln" style="left:383px;top:406px">19</div>
<div class="code" style="left:462px;top:406px;color:#dcdcdc"><span style="color:#57a64a">//   5. <span class="c">转到</span>“<span class="c">项目</span>”&gt;“<span class="c">添加新项</span>”<span class="c">以创建新的代码文件，或转到</span>“<span class="c">项目</span>”&gt;“<span class="c">添加现有项</span>”<span class="c">以将现有代码文件添加到项目</span></span></div>
<div class="ln" style="left:383px;top:422px">20</div>
<div class="code" style="left:462px;top:422px;color:#dcdcdc"><span style="color:#57a64a">//   6. <span class="c">将来，若要再次打开此项目，请转到</span>“<span class="c">文件</span>”&gt;“<span class="c">打开</span>”&gt;“<span class="c">项目</span>”<span class="c">并选择</span> .sln <span class="c">文件</span></span></div>
<div class="ln" style="left:383px;top:438px">21</div>
<svg class="a" style="left:451px;top:121px;" width="9" height="9" viewBox="0 0 9 9"><path d="M0.500 0.500h8v8h-8z" fill="#1e1e1e" stroke="#b8b8b8" stroke-width="1"/><path d="M2 4.500h5" stroke="#e0e0e0" stroke-width="1"/></svg>
<div class="a" style="left:456px;top:130px;width:1px;height:19px;background:#b0b0b0;"></div>
<div class="a" style="left:456px;top:148px;width:5px;height:1px;background:#b0b0b0;"></div>
<svg class="a" style="left:451px;top:201px;" width="9" height="9" viewBox="0 0 9 9"><path d="M0.500 0.500h8v8h-8z" fill="#1e1e1e" stroke="#b8b8b8" stroke-width="1"/><path d="M2 4.500h5" stroke="#e0e0e0" stroke-width="1"/></svg>
<div class="a" style="left:456px;top:210px;width:1px;height:51px;background:#b0b0b0;"></div>
<div class="a" style="left:456px;top:260px;width:5px;height:1px;background:#b0b0b0;"></div>
<svg class="a" style="left:451px;top:281px;" width="9" height="9" viewBox="0 0 9 9"><path d="M0.500 0.500h8v8h-8z" fill="#1e1e1e" stroke="#b8b8b8" stroke-width="1"/><path d="M2 4.500h5" stroke="#e0e0e0" stroke-width="1"/></svg>
<div class="a" style="left:456px;top:290px;width:1px;height:19px;background:#b0b0b0;"></div>
<div class="a" style="left:456px;top:308px;width:5px;height:1px;background:#b0b0b0;"></div>
<svg class="a" style="left:451px;top:329px;" width="9" height="9" viewBox="0 0 9 9"><path d="M0.500 0.500h8v8h-8z" fill="#1e1e1e" stroke="#b8b8b8" stroke-width="1"/><path d="M2 4.500h5" stroke="#e0e0e0" stroke-width="1"/></svg>
<div class="a" style="left:456px;top:338px;width:1px;height:99px;background:#b0b0b0;"></div>
<div class="a" style="left:456px;top:436px;width:5px;height:1px;background:#b0b0b0;"></div>
<div class="a" style="left:465px;top:231px;width:1px;height:15px;background:repeating-linear-gradient(to bottom,#8a8a8a 0,#8a8a8a 3px,transparent 3px,transparent 6px);"></div>
<div class="a" style="left:370px;top:645px;width:1518px;height:18px;background:#2e2e2e;"></div>
<div class="a" style="left:370px;top:645px;width:61px;height:18px;background:#3d3d3d;"></div>
<div class="a" style="left:370px;top:663px;width:1518px;height:8px;background:#2d2d2d;"></div>
<div class="a" style="left:370px;top:663px;width:1518px;height:1px;background:#3a3a3a;"></div>
<div class="a" style="left:366px;top:72px;width:2px;height:928px;background:#2d2d2d;"></div>
<div class="t" style="left:373.5px;top:647px;height:16px;line-height:16px;color:#f0f0f0;font-size:11.5px;letter-spacing:-0.3px;">100 %</div>
<svg class="a" style="left:422.0px;top:653.0px" width="6" height="3" viewBox="0 0 6 3"><path d="M0 0H6L3.0 3Z" fill="#e0e0e0"/></svg>
<svg class="a" style="left:454px;top:648px;" width="12" height="12" viewBox="0 0 12 12"><circle cx="6" cy="6" r="5.500" fill="#8ad08a"/><path d="M3.200 6.200l2 2l3.600-4" fill="none" stroke="#1f1f1f" stroke-width="1.400"/></svg>
<div class="t" style="left:471px;top:647px;height:16px;line-height:16px;color:#e6e6e6;font-size:11.1px;">未找到相关问题</div>
<div class="a" style="left:627px;top:645px;width:17px;height:18px;background:#333333;"></div>
<svg class="a" style="left:632px;top:650px;" width="5" height="9" viewBox="0 0 5 9"><path d="M5 0v9L0 4.500z" fill="#999"/></svg>
<div class="a" style="left:1671px;top:645px;width:16px;height:18px;background:#333333;"></div>
<svg class="a" style="left:1677px;top:650px;" width="5" height="9" viewBox="0 0 5 9"><path d="M0 0v9L5 4.500z" fill="#999"/></svg>
<div class="t" style="left:1709px;top:647px;height:16px;line-height:16px;color:#e6e6e6;font-size:11.5px;">行: 10</div>
<div class="t" style="left:1756px;top:647px;height:16px;line-height:16px;color:#e6e6e6;font-size:11.5px;">字符: 1</div>
<div class="a" style="left:1800px;top:645px;width:40px;height:18px;border:1px solid #3d3d3d;"></div>
<div class="t" style="left:1800px;top:647px;height:16px;line-height:16px;color:#e6e6e6;font-size:11.5px;width:40px;text-align:center;">空格</div>
<div class="a" style="left:1842px;top:645px;width:46px;height:18px;border:1px solid #3d3d3d;"></div>
<div class="t" style="left:1841px;top:646px;height:16px;line-height:16px;color:#e6e6e6;font-size:10.5px;letter-spacing:-0.300px;width:46px;text-align:center;">CRLF</div>
<div class="a" style="left:370px;top:671px;width:1519px;height:309px;border:1px solid #3d3d3d;border-top:none;"></div>
<div class="a" style="left:370px;top:670.5px;width:1518px;height:2.5px;background:#7160e8;"></div>
<div class="t" style="left:375px;top:676px;height:16px;line-height:16px;color:#fafafa;">输出</div>
<svg class="a" style="left:407px;top:680px;" width="1420" height="5" viewBox="0 0 1420 5"><defs><pattern id="dp" x="0" y="0" width="4" height="4" patternUnits="userSpaceOnUse"><rect x="0" y="0" width="1" height="1" fill="#5c5c5c"/><rect x="2" y="2" width="1" height="1" fill="#5c5c5c"/></pattern></defs><rect x="0" y="0" width="1420" height="5" fill="url(#dp)"/></svg>
<svg class="a" style="left:1835.5px;top:680.5px" width="7" height="4" viewBox="0 0 7 4"><path d="M0 0H7L3.5 4Z" fill="#e0e0e0"/></svg>
<svg class="a" style="left:1852px;top:677px;" width="9" height="11" viewBox="0 0 9 11"><path d="M2.500 0.500h4v6h-4z" fill="#2b2b2b" stroke="#e0e0e0" stroke-width="1"/><path d="M5.500 0.500v6" stroke="#e0e0e0" stroke-width="1.600"/><path d="M0.500 7.500h8M4.500 7.500v3.500" fill="none" stroke="#e0e0e0" stroke-width="1"/></svg>
<svg class="a" style="left:1869.5px;top:679px;" width="9.5" height="8" viewBox="0 0 9.5 8"><path d="M0.500 0.500L9.0 7.5M9.0 0.500L0.500 7.5" stroke="#e0e0e0" stroke-width="1.400"/></svg>
<div class="t" style="left:378px;top:700px;height:16px;line-height:16px;color:#fafafa;">显示输出来源(S):</div>
<div class="a" style="left:474px;top:697px;width:300px;height:20px;background:#3d3d3d;"></div>
<svg class="a" style="left:764.0px;top:706.0px" width="6" height="3" viewBox="0 0 6 3"><path d="M0 0H6L3.0 3Z" fill="#e0e0e0"/></svg>
<div class="a" style="left:780px;top:698px;width:2px;height:18px;background:#444;"></div>
<svg class="a" style="left:788px;top:700px;" width="14" height="14" viewBox="0 0 14 14"><path d="M1 8.500h5M3 6.500l-2 2M4.500 1.500c2 0 3 1.500 3 3.500v3" fill="none" stroke="#484848" stroke-width="1.100"/><path d="M0 11h14M0 13.500h14" stroke="#484848" stroke-width="1"/></svg>
<div class="a" style="left:810px;top:698px;width:2px;height:18px;background:#444;"></div>
<svg class="a" style="left:818px;top:700px;" width="14" height="14" viewBox="0 0 14 14"><path d="M1 3.500h6M3 1.500l-2 2l2 2" fill="none" stroke="#484848" stroke-width="1.100"/><path d="M3 8.500h11M0 11h14M0 13.500h14" stroke="#484848" stroke-width="1"/></svg>
<svg class="a" style="left:840px;top:700px;" width="14" height="14" viewBox="0 0 14 14"><path d="M1 3.500h6M5 1.500l2 2l-2 2" fill="none" stroke="#484848" stroke-width="1.100"/><path d="M3 8.500h11M0 11h14M0 13.500h14" stroke="#484848" stroke-width="1"/></svg>
<div class="a" style="left:862px;top:698px;width:2px;height:18px;background:#444;"></div>
<svg class="a" style="left:871px;top:700px;" width="14" height="14" viewBox="0 0 14 14"><path d="M0.500 0.500l4 4M4.500 0.500l-4 4" stroke="#484848" stroke-width="1.100"/><path d="M6 1.500h8M6 4h8M0 6.500h14M0 9h14M0 11.500h14M0 14h14" stroke="#484848" stroke-width="1"/></svg>
<div class="a" style="left:892px;top:698px;width:2px;height:18px;background:#444;"></div>
<svg class="a" style="left:900px;top:700px;" width="15" height="14" viewBox="0 0 15 14"><text x="0.500" y="5.800" font-family="Liberation Sans,sans-serif" font-size="8.500" font-weight="bold" letter-spacing="-0.300" fill="#f0f0f0">ab</text><text x="0.500" y="12" font-family="Liberation Sans,sans-serif" font-size="8.500" font-weight="bold" fill="#f0f0f0">c</text><path d="M10.500 4.500h4v6h-8M8.500 8.500l-2 2l2 2" fill="none" stroke="#55aaff" stroke-width="1.200"/></svg>
<div class="a" style="left:371px;top:980px;width:83px;height:19px;background:#333333;"></div>
<div class="t" style="left:371px;top:983px;height:16px;line-height:16px;color:#d0d0d0;width:83px;text-align:center;">调用层次结构</div>
<div class="a" style="left:455px;top:979px;width:33.5px;height:21px;background:#1f1f1f;border-bottom:2px solid #ababab;"></div>
<div class="t" style="left:455px;top:983px;height:16px;line-height:16px;color:#ffffff;width:33.5px;text-align:center;">输出</div>
<div class="a" style="left:490.5px;top:980px;width:82.5px;height:19px;background:#333333;"></div>
<div class="t" style="left:490.5px;top:983px;height:16px;line-height:16px;color:#d0d0d0;width:82.5px;text-align:center;">查找符号结果</div>
<div class="a" style="left:575px;top:980px;width:58px;height:19px;background:#333333;"></div>
<div class="t" style="left:575px;top:983px;height:16px;line-height:16px;color:#d0d0d0;width:58px;text-align:center;">错误列表</div>
<div class="a" style="left:1914px;top:72px;width:6px;height:96px;background:#3c3c3c;"></div>
<div class="t" style="left:1895.300px;top:72px;width:14px;height:96px;writing-mode:vertical-rl;text-orientation:sideways;line-height:14px;color:#f0f0f0;text-align:center;font-size:11.500px;letter-spacing:0.350px">服务器资源管理器</div>
<div class="a" style="left:1914px;top:180px;width:6px;height:36px;background:#3c3c3c;"></div>
<div class="t" style="left:1895.300px;top:180px;width:14px;height:36px;writing-mode:vertical-rl;text-orientation:sideways;line-height:14px;color:#f0f0f0;text-align:center;font-size:11.500px;letter-spacing:0.350px">工具箱</div>
<div class="a" style="left:1914px;top:228px;width:6px;height:24px;background:#3c3c3c;"></div>
<div class="t" style="left:1895.300px;top:228px;width:14px;height:24px;writing-mode:vertical-rl;text-orientation:sideways;line-height:14px;color:#f0f0f0;text-align:center;font-size:11.500px;letter-spacing:0.350px">通知</div>
<div class="a" style="left:1914px;top:264px;width:6px;height:24px;background:#3c3c3c;"></div>
<div class="t" style="left:1895.300px;top:264px;width:14px;height:24px;writing-mode:vertical-rl;text-orientation:sideways;line-height:14px;color:#f0f0f0;text-align:center;font-size:11.500px;letter-spacing:0.350px">属性</div>
<div class="a" style="left:0px;top:1007px;width:1920px;height:26px;background:#424242;"></div>
<div class="a" style="left:0px;top:1032px;width:1920px;height:1px;background:#2b2b2b;"></div>
<svg class="a" style="left:4px;top:1013px;" width="16" height="12" viewBox="0 0 16 12"><path d="M3.500 0.700h11.500l-2.500 10.600h-11.500z" fill="none" stroke="#f0f0f0" stroke-width="1.300" stroke-linejoin="round"/></svg>
<div class="t" style="left:28px;top:1013px;height:16px;line-height:16px;color:#fafafa;font-weight:400;">就绪</div>
<svg class="a" style="left:1614px;top:1013px;" width="10" height="12" viewBox="0 0 10 12"><path d="M5 11.500v-10.500M1 5L5 1L9 5" fill="none" stroke="#f0f0f0" stroke-width="1.800"/></svg>
<div class="t" style="left:1633px;top:1013px;height:16px;line-height:16px;color:#fafafa;font-weight:400;">添加到源代码管理</div>
<svg class="a" style="left:1735.0px;top:1017.0px" width="8" height="4" viewBox="0 0 8 4"><path d="M0 4H8L4.0 0Z" fill="#f0f0f0"/></svg>
<svg class="a" style="left:1765.5px;top:1011.5px;" width="15" height="15" viewBox="0 0 15 15"><path d="M7.500 0.200L14.800 7.500L7.500 14.800L0.200 7.500Z" fill="#dcdcdc"/><path d="M5.300 3.300l3.600 3.600M7.500 5.600v5" stroke="#424242" stroke-width="1.200" fill="none"/><circle cx="9.400" cy="7.400" r="1.300" fill="#424242"/><circle cx="7.500" cy="10.800" r="1.300" fill="#424242"/><circle cx="7.500" cy="5.500" r="1.100" fill="#424242"/></svg>
<div class="t" style="left:1787px;top:1013px;height:16px;line-height:16px;color:#fafafa;font-weight:400;">选择存储库</div>
<svg class="a" style="left:1853.0px;top:1017.0px" width="8" height="4" viewBox="0 0 8 4"><path d="M0 4H8L4.0 0Z" fill="#f0f0f0"/></svg>
<svg class="a" style="left:1883px;top:1012px;" width="14" height="15" viewBox="0 0 14 15"><path d="M1 12c1-1 1.500-2.500 1.500-5.500c0-3 1.800-5.300 4.500-5.300s4.500 2.300 4.500 5.300c0 3 .5 4.500 1.500 5.500z" fill="#55503f" stroke="#f0d490" stroke-width="1.200" stroke-linejoin="round"/><path d="M5.500 13.500c.3.800 2.700.800 3 0" fill="none" stroke="#d0d0d0" stroke-width="1"/></svg>
<div class="a" style="left:1890px;top:1018.3px;width:12px;height:12px;background:#f79ba5;border-radius:50%;"></div>
<div class="t" style="left:1890px;top:1017.3px;height:14px;line-height:14px;color:#10102a;font-size:10px;width:12px;text-align:center;font-weight:400;">2</div>
<div class="a" style="left:1911px;top:962px;width:12px;height:58px;background:#2b3040;border-radius:3px;border:1px solid #3a4050;"></div>
<svg class="a" style="left:1914px;top:968px;" width="5" height="46" viewBox="0 0 5 46"><rect x="0" y="0" width="4" height="1" fill="#22252e"/><rect x="0" y="2" width="4" height="1" fill="#22252e"/><rect x="0" y="4" width="4" height="1" fill="#22252e"/><rect x="0" y="6" width="4" height="1" fill="#22252e"/><rect x="0" y="8" width="4" height="1" fill="#22252e"/><rect x="0" y="10" width="4" height="1" fill="#22252e"/><rect x="0" y="12" width="4" height="1" fill="#22252e"/><rect x="0" y="14" width="4" height="1" fill="#22252e"/><rect x="0" y="16" width="4" height="1" fill="#22252e"/><rect x="0" y="18" width="4" height="1" fill="#22252e"/><rect x="0" y="20" width="4" height="1" fill="#22252e"/><rect x="0" y="22" width="4" height="1" fill="#22252e"/><rect x="0" y="24" width="4" height="1" fill="#22252e"/><rect x="0" y="26" width="4" height="1" fill="#22252e"/><rect x="0" y="28" width="4" height="1" fill="#22252e"/><rect x="0" y="30" width="4" height="1" fill="#7fd46a"/><rect x="0" y="32" width="4" height="1" fill="#7fd46a"/><rect x="0" y="34" width="4" height="1" fill="#6fd080"/><rect x="0" y="36" width="4" height="1" fill="#5fcb8a"/><rect x="0" y="38" width="4" height="1" fill="#4fc79a"/><rect x="0" y="40" width="4" height="1" fill="#44c3a6"/><rect x="0" y="42" width="4" height="1" fill="#3cbfb0"/><rect x="0" y="44" width="4" height="1" fill="#36bbb8"/></svg>
</body></html>
